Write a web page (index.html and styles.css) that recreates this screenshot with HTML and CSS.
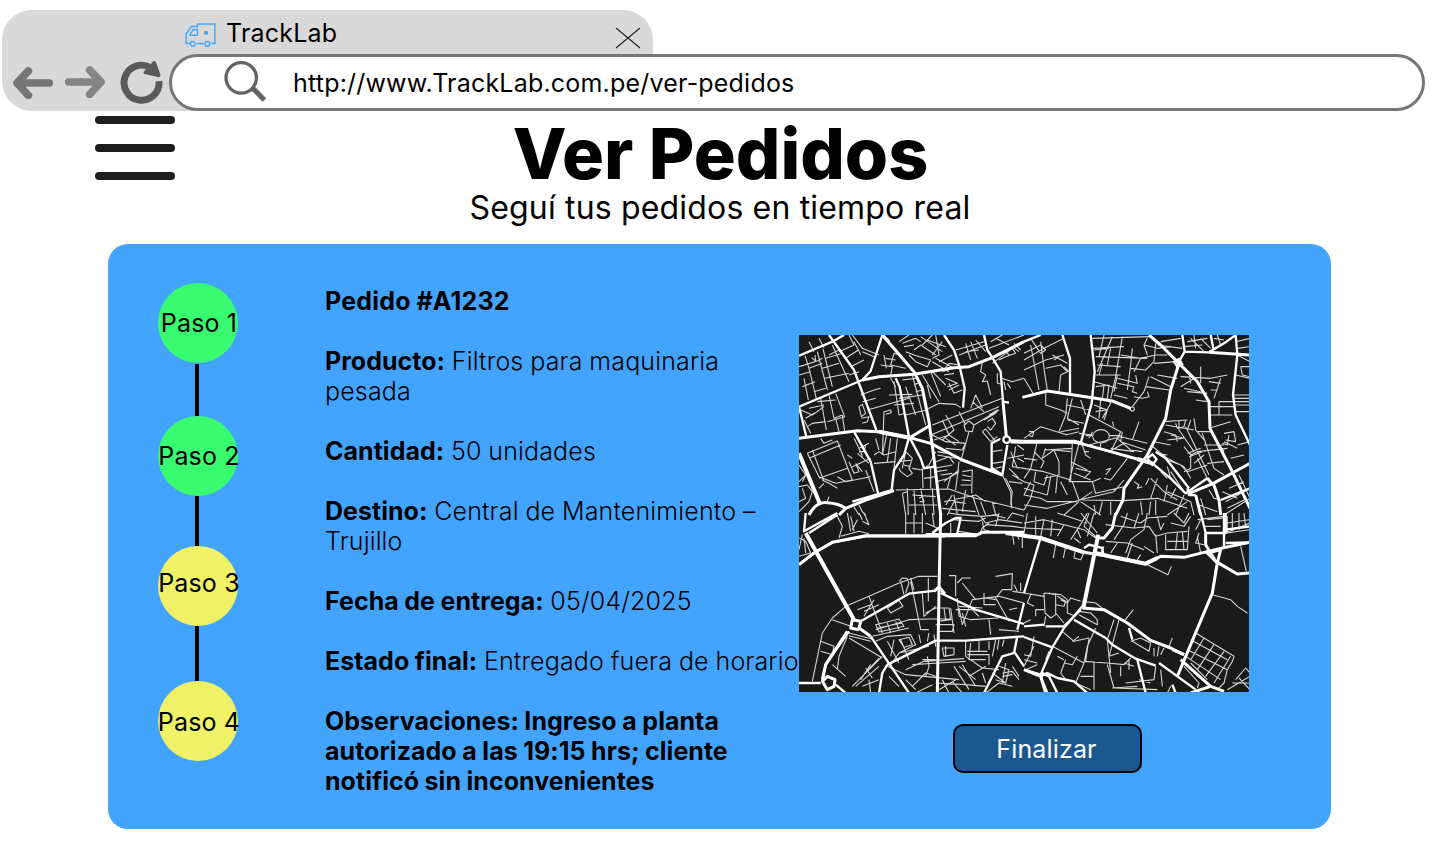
FILE: index.html
```html
<!DOCTYPE html>
<html lang="es">
<head>
<meta charset="utf-8">
<title>TrackLab</title>
<link rel="stylesheet" href="styles.css">
</head>
<body>
<header class="browser">
  <div class="tab">
    <svg class="van" viewBox="0 0 90 70" fill="none" stroke="#45a9fb" stroke-width="4.2">
      <path d="M13 60H3V32L18 10H36V3H87V60H75M31 60H34M37 60H54"/>
      <path d="M15 36V32L24 19H36V36Z"/>
      <circle cx="22" cy="61" r="7"/><circle cx="65" cy="61" r="7"/>
      <circle cx="61" cy="29" r="4" fill="#45a9fb"/>
    </svg>
    <span class="tab-title">TrackLab</span>
    <svg class="close" viewBox="0 0 26 22" stroke="#222" stroke-width="1.1"><path d="M1 1L25 21M25 1L1 21"/></svg>
  </div>
  <div class="toolbar">
    <svg class="arrow" viewBox="0 0 120 96" fill="none" stroke="#767676" stroke-width="23" stroke-linecap="round" stroke-linejoin="round"><path d="M109 48H16M46 12L12 48L46 85"/></svg>
    <svg class="arrow forward" viewBox="0 0 120 96" fill="none" stroke="#858585" stroke-width="23" stroke-linecap="round" stroke-linejoin="round"><path d="M11 48H104M74 12L108 48L74 85"/></svg>
    <svg class="reload" viewBox="0 0 130 130">
      <path d="M118 61A53 53 0 1 1 92 20" fill="none" stroke="#5a5a58" stroke-width="21"/>
      <path d="M107 1Q98 -2 94 9L71 33Q71 40 79 40L117 49Q124 49 122 41L109 4Z" fill="#5a5a58"/>
    </svg>
    <div class="address">
      <svg class="search" viewBox="0 0 128 130" fill="none" stroke="#636363"><circle cx="51" cy="51" r="46" stroke-width="10"/><path d="M82 85L90 86L121 118" stroke-width="15"/></svg>
      <span>http://www.TrackLab.com.pe/ver-pedidos</span>
    </div>
  </div>
</header>

<main>
  <div class="heading">
    <div class="menu"><i></i><i></i><i></i></div>
    <div class="titles">
      <h1>Ver Pedidos</h1>
      <p>Seguí tus pedidos en tiempo real</p>
    </div>
  </div>

  <section class="card">
    <ol class="steps">
      <li class="step done"><span>Paso 1</span></li>
      <li class="line first"></li>
      <li class="step done"><span>Paso 2</span></li>
      <li class="line second"></li>
      <li class="step pending third"><span>Paso 3</span></li>
      <li class="line last"></li>
      <li class="step pending fourth"><span>Paso 4</span></li>
    </ol>
    <div class="details">
      <p><b class="order">Pedido #A1232</b></p>
      <p><b>Producto:</b> Filtros para maquinaria<br>pesada</p>
      <p><b>Cantidad:</b> 50 unidades</p>
      <p><b>Destino:</b> Central de Mantenimiento –<br>Trujillo</p>
      <p><b>Fecha de entrega:</b> 05/04/2025</p>
      <p><b>Estado final:</b> Entregado fuera de horario</p>
      <p><b>Observaciones: Ingreso a planta<br>autorizado a las 19:15 hrs; cliente<br>notificó sin inconvenientes</b></p>
    </div>
    <div class="tracking">
      <svg class="map" viewBox="0 0 1350 1071">
        <!-- north-west -->
        <g>
          <path class="minor" d="M30 20L45 50M60 10L75 38M0 95L55 78L70 70M18 62L30 100L52 190M38 68L50 78L48 60M55 50L85 165M72 42L100 155M100 30L150 140M0 120L35 110M15 130L28 195M30 100L70 85M10 155L48 140M45 170L80 160M78 130L150 115M70 100L120 85M80 70L130 55M90 60L120 45M120 50L165 30L150 0M140 70L178 45L165 20M155 95L195 75M150 120L180 110M160 0L190 40L240 60M190 50L225 65M178 45L185 60M65 190L82 285M90 180L105 250L130 240M110 175L137 245L85 260M30 220L75 210M5 225L40 240L75 215M20 250L45 235M25 275L40 265L80 260M110 250L120 290M130 240L137 290M15 255L35 295M55 200L110 195M185 180L225 165L245 160M190 200L230 190M205 225L330 190M180 215L190 208L200 235L187 245L180 215M187 250L210 245L205 260L190 265M250 360L255 230L275 225L277 233L260 238M285 140L300 240L318 235M270 180L340 178M275 130L290 155M285 210L345 205M310 135L350 130M320 155L350 240M340 120L380 270M300 190L370 180M320 240L382 225M345 150L365 140M350 170L370 165M245 90L280 95L275 120M255 60L262 100M260 70L290 75M285 55L275 90L320 100M285 55L300 60M300 20L330 0M310 25L350 10L365 20M315 35L345 30M320 50L345 60L395 75L385 95L350 80L330 60M345 45L365 30L410 60M365 5L430 50M370 30L400 0M385 15L440 35M410 0L420 60L400 70M430 20L400 60M410 70L465 100M400 80L450 110M420 80L460 60M450 85L435 105M450 85L480 90M430 110L460 100M435 120L465 115M440 130L475 145L445 155M400 110L440 150M450 145L465 175L490 165M450 165L480 150M370 120L420 200M385 150L395 190M380 225L420 205L470 208L485 218M395 110L425 185"/>
          <path class="minor" d="M470 45L555 20M480 60L560 30M500 25L515 75M515 20L535 70M530 15L560 50M500 50L540 45M575 20L610 0M570 40L675 0M590 10L630 30M580 85L640 40L650 55L620 65L600 75M620 50L630 60M640 35L660 50M645 25L665 45M550 80L545 110L560 120L550 140L565 138L575 180M608 130L640 140L675 130M595 115L595 145L610 148M615 140L620 165M625 145L635 160M400 270L610 190M395 300L600 215M430 255L450 300L480 320M480 230L500 270M520 200L555 230M515 220L530 180L550 220M440 240L465 285L430 315M400 300L440 320L500 325L490 345L440 340M405 315L450 300M440 310L470 330M495 270L510 258L525 270L520 290L500 288L495 270M525 270L600 225M510 290L485 380M570 240L595 225L590 235L555 255M565 260L580 250L590 265L575 285L565 275M550 290L560 282L590 320L605 310M550 290L575 320L595 305M580 350L610 345M580 385L615 380M590 400L610 395M415 350L445 355M410 380L450 365L465 385M405 400L460 390M415 360L470 370M410 410L445 405M425 420L460 415M410 440L450 430M435 440L480 405M445 460L455 425L480 410M470 465L480 380M490 410L520 405L518 475M490 420L515 425M488 435L515 437M485 450L518 450M625 370L675 360M635 350L655 400M650 335L640 395L675 400M630 400L660 430M640 420L675 440M655 370L675 380M655 330L675 345"/>
          <path class="minor" d="M25 355L115 318L160 435L110 445L60 425L25 355M40 345L75 440M30 370L125 330M65 310L75 325L100 315M60 430L145 400M70 435L90 445L115 460M60 460L75 445M165 310L185 350L190 365M180 340L210 325M180 350L195 350L200 330M175 355L210 385M160 395L215 370M150 380L165 415L180 410L170 385M170 385L190 410M145 360L160 370M115 425L140 440L215 425M200 405L225 470M240 350L255 360L290 350M225 360L240 350M225 385L290 380M265 290L250 360M295 310L285 400M275 310L265 380M320 350L340 370L330 400L340 415L325 425L305 410L300 400M300 380L340 375M340 400L370 405M315 390L335 395M230 310L240 345M320 350L310 400M370 400L372 460M395 395L395 460M375 430L410 425M410 350L390 390L375 400M0 390L20 420L0 440M0 455L25 450L40 470L30 500L0 530M10 460L20 490L0 500M25 410L10 440M85 500L90 485M180 510L190 530L200 540M165 515L180 540M310 475L320 540M325 460L328 540M345 465L350 540M310 475L325 470M290 465L450 462L530 490L675 525M360 490L370 485L375 500L362 500M365 460L380 540M400 460L405 540M330 510L415 510M340 480L410 485M435 500L530 480L560 500M430 520L530 530M465 480L475 540M500 465L490 530M520 480L540 540M545 500L560 540M580 500L590 540M460 480L440 510M445 540L465 500L500 505M630 440L670 445M620 430L640 470L635 510"/>
          <path class="medium" d="M0 62L100 20L135 0M90 0L165 105L232 285M250 0L215 108L190 135L0 215L22 305M290 130L302 155L330 305M555 0L565 45L580 68L605 110L612 200L630 203M435 0L465 45L482 95L497 160L492 218M165 290L215 380L237 475M330 308L315 360L285 405L278 465L160 500M332 308L365 370L375 400L405 395M578 405L578 325L603 312M580 400L610 420L625 330"/>
          <path class="minor" d="M610 420L635 470L638 520"/>
          <path class="main" d="M190 135L240 125L345 118L465 98L510 95L580 68L675 20M250 0L345 110L370 160L390 260L405 370L425 540M0 310L175 287L240 290L332 308L395 325L490 375L610 420M332 308L395 270M635 320H675M612 200L622 305M250 0L270 20"/>
          <circle class="medium" cx="623" cy="314" r="10"/>
          <path class="wide" d="M0 355L62 505M240 290L332 308"/>
          <path class="main" d="M30 540Q50 500 85 503Q120 505 140 520L120 540M140 520L200 495L285 467"/>
        </g>
        <!-- north-east -->
        <g transform="translate(675 0)">
          <path class="minor" d="M0 75L60 40L120 10M20 10L50 55M0 105L65 75L120 60M50 20L62 115L70 165M20 30L45 165M0 55L50 30L65 45L50 55M0 130L30 180M85 60L130 85M90 75L105 65M65 100L110 90L130 110L110 120L105 170M120 95L135 110M205 10L380 5M210 45L255 40M215 65L370 70M220 90L290 95M215 120L290 120M205 40L300 35M240 0L225 65M265 5L220 110M295 5L275 125L260 190M325 40L320 90L310 165M290 60L350 70M235 85L225 120M260 40L250 90M210 140L280 160M215 155L255 150L250 190M240 150L235 190M280 130L340 145L335 120M280 145L330 155L325 170L340 175M270 180L310 190M280 120L270 170M330 110L350 70L395 60M320 100L365 105L390 80L395 25M370 10L360 30L370 60M360 30L400 40L440 35M395 60L430 60M390 85L455 80M380 125L440 155M375 125L360 170L325 215M365 155L435 165M330 185L355 190L375 185L370 170M400 120L460 130M410 20L470 10M400 30L475 40M65 165L65 210L110 225L130 235M130 190L125 240L105 290M145 190L130 250L165 270M170 195L185 240M130 210L200 225M130 255L180 265M110 290L165 280M125 300L165 290M195 240L290 290L260 350M230 195L225 250M210 210L250 225L240 255M250 190L260 205L235 250M215 230L245 225M265 260L270 275M345 260L325 315M195 330L290 305L370 325M280 310L320 345L355 350M295 290L290 320L365 345M255 350L300 325M260 340L330 350M205 290L195 310M165 295L205 300M0 310L50 275L130 300M15 290L30 290L25 305L12 300M40 320L20 400L0 430M30 350L60 380L50 400M65 340L55 370L90 345L105 380V420M60 345L145 340M145 325L140 440M165 325L135 440M90 345L140 350M105 420L60 430M40 375L0 370"/>
          <path class="minor" d="M175 330L185 360L200 370M180 350L195 350M140 380L190 405M155 400L200 410L180 430M150 415L200 435M135 440L205 440L230 430M245 420L260 400L245 405M240 430L260 435L310 370M205 440L215 475L300 455M145 440L165 495L270 470L300 435M0 400L60 410L140 435M35 410L30 440L60 450L70 420M80 425L70 480M100 425L95 475M110 440L130 480M20 440L0 480L50 490L70 500L160 500M0 510L70 520L170 495M20 490L0 525M165 497L205 470M170 500L230 540M165 500L120 540M175 495L300 497L400 490L490 520M210 510L215 540M235 500L225 540M260 500L260 540M350 500L355 540M380 500L375 540M395 495V540M330 440L345 450L340 460L355 455M365 450L375 430M400 430L380 490M380 430L420 470L460 495M430 450L420 500M455 460L440 490M480 480L455 540M490 500L430 540M410 410L430 430M430 395L440 430M440 410L480 470M380 330L430 370L480 395M390 320L440 330M400 355L430 360M420 360L430 375L470 390L490 410M420 260L490 255M455 265L460 280L480 275L485 255M425 270L510 285M465 255V285L510 350M485 275L555 420M420 290L455 300L460 320M440 300L480 310M430 315L475 310M510 250L515 285L545 320M500 255L490 285M520 290L560 290L600 350M535 295L570 400L600 420M480 335L500 360L520 350M490 355L530 340M495 365L535 350M500 355L500 400L480 410M480 395L500 430M490 410L550 390M520 370L550 430M510 385L540 360M480 160L530 170M470 125L560 130L610 120M495 110L500 145M530 95V145M470 155L510 130M490 170L550 175M555 140L590 145M590 130L570 190M560 165L580 165M515 195L550 200M585 200H630M560 215H630M585 200V240M560 240H625M635 120L678 130M630 180H678M630 190H678M630 200H678M630 210H678M630 230H678M650 95H678M650 95L655 120L678 125M555 280L620 260M600 295L630 290L635 320L605 315M615 300L610 330L595 325M600 320L640 340M640 330L678 320M620 370L660 360M540 330L600 330M520 350L610 340M600 380L550 385M500 10L540 50M510 0L515 40M490 20L550 10M530 10L560 40M480 35L535 30M570 10L600 15M580 0L590 30M635 20L678 10M640 40L678 35M640 60L678 80"/>
          <path class="minor" d="M555 465L570 490L590 495M595 470L640 490M605 500L678 460M610 520L660 495M600 540L678 490M615 460L660 440M645 420L678 490M530 490L545 540M525 510L580 530M500 500L510 540M0 440L30 450L20 490M0 460L70 480M430 470L500 500"/>
          <path class="medium" d="M115 0L138 70V180M0 20L50 0M200 0L212 110L203 205L170 325M475 0L482 50L465 80M560 0L568 40M482 50L555 52L600 25L635 0M635 0L640 60L627 180L635 240L678 330M265 198L320 220M395 350L425 370L495 460M385 385L440 430L485 475L550 430M590 495L678 460"/>
          <circle class="minor" cx="325" cy="222" r="6"/>
          <ellipse class="minor" cx="231" cy="304" rx="25" ry="20"/>
          <path class="minor" d="M185 302H205M257 302H290M230 325L228 345"/>
          <path class="main" d="M-5 187L70 168L205 188L265 198L320 220M375 0L410 30L465 85L520 140L555 200L558 280L625 410L678 520M465 85L440 165L425 250L370 360L300 460L297 495L275 540M150 320L260 350L360 378L385 385M555 52L678 60M495 475L568 445L678 385M568 445L585 495L590 540M515 480L530 540M550 430L568 450"/>
          <path class="wide" d="M-40 319L0 320H150L175 326M340 372L385 385"/>
          <path class="medium" d="M370 370L385 358L398 373L385 390L370 370M450 80L465 72L475 88L460 95ZM490 460L495 480L515 480"/>
        </g>
        <!-- south-west -->
        <g transform="translate(0 534)">
          <path class="minor" d="M110 0L130 40L120 75M125 70L180 55L210 62M155 10L165 55M145 0L155 55M175 20L160 50M180 0L190 20M195 0L210 35L190 25M0 75L20 85L35 120L0 130M10 65L0 110M15 75L20 120M320 0V62M345 0V60M370 0V60M320 30H370M400 0L405 40M380 30L415 45L400 60M450 0L480 5L550 10L600 5M460 20L540 25L560 15M455 30L455 60M480 55L540 65L550 45L570 30M550 25L555 50L590 60M545 10L560 30L600 20L670 30M560 35L640 40L675 45M600 0L590 40M625 20L640 0L675 10M640 60L645 95M655 65L660 80M670 60L670 105M580 5L620 15"/>
          <path class="minor" d="M40 505L70 360L100 315L140 280L210 250L300 210L360 190L415 190M300 205L310 195L325 197L330 210L320 240M305 205L315 245M335 205L365 350M388 195V265M335 195L345 230M100 320L155 340M210 250L250 360M225 260L195 310M175 290L215 275M195 295L240 275M265 285L300 262L312 280L275 300ZM230 335L300 318L315 340L240 357ZM235 345L310 330M265 330L275 360M290 325L300 350M230 350L330 320L390 318H460M370 240L375 310L410 280M380 300L410 285H450L455 320L415 325M365 350H390M415 355H460L465 335L410 335M435 285L440 320M455 285L465 360M480 285L490 335L500 310L520 260L600 250L675 270M475 255L480 310L515 320L600 315M450 188H470V250M475 210L490 195L515 195M490 210L530 260M590 190L640 182L638 230L610 230L590 255L630 325M555 240V275H590M560 255L590 260M640 235L675 240M645 215L655 235M665 210V235M480 280L550 285M470 290L520 290L540 310M570 320L575 365M490 300L500 340M600 350L660 355M630 290L655 285"/>
          <path class="minor" d="M65 385L105 400L100 425L65 415M150 360L220 378M150 368L215 385M145 370L120 430L115 470M150 375L250 435M230 385L265 370L335 365L350 395L300 420M220 370L330 345M300 380L330 373L340 395L315 403ZM265 385L300 450M305 380L330 440M285 380L275 430M250 430L160 520M240 435L190 490M215 455L185 500M200 465L220 495M100 455L140 490M265 460L320 485L480 500M360 365L365 390M390 360L385 385M405 365L410 400M275 455L300 420L390 400M320 470L375 445L495 437M340 455L420 450L500 445M370 440H410M385 430L390 460L380 490M430 405H465V425L435 430ZM440 400V430M500 385V430L550 465L600 470M515 390L510 440L560 440M540 385V415M505 415H565M505 425H570V455M570 385V410M590 380L580 430M600 380L595 410M615 380L610 400M465 460L510 530M490 455L530 520M480 460L530 500M510 490L560 460M270 490L300 520M320 500L350 530M340 520L380 480L410 490M410 510L500 515L560 520M420 530L470 500M430 500L450 540M460 505L490 540M350 540L400 515M550 480L560 510M240 500L190 520M170 520L240 460M210 500L215 540M600 460L630 470L620 510L590 500M610 480L640 475L660 500M610 490L640 485M600 510L640 520M620 450L610 510M640 460L660 490M580 480L620 510M560 540L600 510"/>
          <path class="medium" d="M20 0L15 55L60 30L115 0M0 155L45 120L100 88L200 70H440M30 60L115 5M185 325L330 242L410 233M425 240L530 290L675 333M215 370L330 540M70 505L80 455L150 355M265 455L410 383H500L675 370M655 350L675 270M265 455L250 480L240 540M555 540L610 430L645 420L655 370M645 415L675 460M440 30L470 15H485L475 60M0 510H65M110 515L140 540M400 60L440 30"/>
          <path class="main" d="M45 120L100 88L200 68H530L550 58H675M425 0L420 235L415 540M0 155L45 120M70 500L80 455L145 355"/>
          <path class="wide" d="M20 60L165 320M380 66H530M620 60L680 68"/>
          <path class="main" d="M160 320L185 325L180 345L215 370M160 320L155 345L180 350M70 505L85 490L108 500L105 520L85 530ZM405 235L420 222L438 243"/>
        </g>
        <!-- south-east -->
        <g transform="translate(675 534)">
          <path class="minor" d="M0 30L60 20L120 35L100 70M10 0L0 60M35 10V65M60 20L50 70M85 20L80 70M0 45L110 50M120 35L180 50L215 75M140 80L160 50L170 75M150 75L165 85M155 80L170 90M190 0L160 50M170 0L220 60M195 0L180 40L220 75M210 0L190 70M100 0L190 30M95 95L88 135M125 100L118 135M155 105L150 135L170 140L180 120M245 85L310 90L360 110M245 35L330 45L375 40L395 70M270 80L300 35L310 0M305 120L320 80L360 50L370 0M240 100L230 120M280 90L260 120M325 90L310 135M350 125L340 140M360 100L390 120M345 0L330 45M290 10L350 30L370 15L430 10M400 10L410 50L420 30M395 65L400 120M395 70L430 60L490 55M425 65V110H490L495 40M430 85H490M460 60L455 110M475 55L480 110M440 30L480 40L500 10M450 0L480 30L495 0M520 20L600 10M540 40L590 40M525 60L515 90L540 95M520 70L530 120M530 20L515 50M550 20L600 15M610 10V60L678 50M610 30L678 20M625 0V55M645 0V50M660 0L665 45M605 60L678 30M650 100L667 175M370 155L432 185L442 160M575 160L565 245L620 260L640 280L670 300"/>
          <path class="minor" d="M60 240L110 245L130 260M60 240L63 300L80 315L95 305V240M75 240L90 245M100 250L125 265L120 280L95 275M110 260L130 270L140 255L170 265M0 240L60 250M20 245L10 270L30 280M60 290L35 290V310M130 260L130 300L155 310M65 310L60 340M95 300L120 330M175 265L215 270L240 290M165 295L200 300L220 320V335L165 305M20 320L0 330M115 355L150 385L195 375L185 445M215 345L190 400L180 450M145 385L165 370M270 320L250 380L260 480M285 320L265 395L255 430L285 420M180 445L250 450L300 455L320 435M210 445V530M85 400L180 450M125 440L110 480L125 500M160 430L145 455L120 450M100 430L120 440M75 415L65 440M30 370L20 430L0 425M30 400L0 460M0 440L40 450M5 470L40 455M170 490H210M180 450L155 510L200 530M250 455L270 525L400 530M265 525L340 520M290 460V490M315 440V470M300 450L330 460M305 510L390 500L395 460M345 500L380 510M390 405V430M405 400L400 430M420 405L410 425M320 385L350 375L380 390L375 415L325 385M328 290L300 325M445 375L435 400M410 470L415 520M440 520L430 540M515 360L630 430L625 445L610 470L600 510L580 530M500 380L610 440M490 410L610 470M485 430L590 500M540 375L500 440M570 395L520 470M600 415L545 490M620 430L570 510M480 460L525 510L520 525M500 450L550 500M610 530L678 490M625 510L678 510M635 500L665 465L678 480M645 495L678 530"/>
          <path class="medium" d="M48 80L0 240M0 340L60 335M65 340H120L170 290M0 372L85 403M85 403L50 485M85 403L120 345L175 280M150 320L245 375L265 395L335 437L395 458M315 345L325 380M340 440L365 540M405 450L515 530M530 0L545 60H605V0M600 0V105M605 90L678 88M180 105L195 95L235 105L238 125M605 50L678 40M0 470L50 485M50 490L70 480L100 495L150 505L190 540M50 490L70 540M70 480L100 540M445 515L455 540"/>
          <path class="main" d="M50 75L180 118L270 133L365 152L410 130L480 133L540 118L605 103L678 88M275 0L265 45L240 75L220 75M175 285L240 290L310 330L380 382L440 405L480 425M580 150L565 240L460 490M580 148L640 183L678 180M470 440L560 520L600 535M545 60L545 95L575 145M0 470L50 490L65 540M500 540L560 520"/>
          <path class="wide" d="M0 68L50 75L180 118M223 65L178 285M215 120L270 133L365 152L400 135"/>
          <path class="main" d="M545 115L580 150L590 110L560 118M445 410L480 425M50 480L80 490"/>
        </g>
      </svg>
      <button class="finish" type="button">Finalizar</button>
    </div>
  </section>
</main>
</body>
</html>
```
FILE: styles.css
```css
* { box-sizing: border-box; }
body {
  margin: 0;
  background: #fff;
  color: #000;
  font-family: Inter, "Liberation Sans", sans-serif;
  font-size: 25px;
  line-height: 30px;
}
svg { display: block; flex: none; }
h1, p, ol { margin: 0; padding: 0; }
.browser {
  width: 651px;
  height: 101px;
  margin: 10px 0 0 2px;
  background: #d9d9d9;
  border-radius: 30px 30px 0 30px;
  letter-spacing: 0.2px;
}
.tab {
  display: flex;
  height: 44px;
  padding: 0 12px 0 183px;
}
.van { width: 31px; height: 24px; margin-top: 13px; }
.tab-title { margin: 8px auto 0 10px; }
.close { width: 26px; height: 22px; margin-top: 17px; }
.toolbar { display: flex; height: 57px; }
.arrow { width: 40px; height: 32px; margin: 13px 0 0 11px; }
.forward { margin: 12px 0 0 12px; }
.reload { width: 43px; height: 43px; margin: 7px 0 0 15px; }
.address {
  flex: none;
  display: flex;
  width: 1256px;
  height: 57px;
  margin-left: 6px;
  padding-left: 52px;
  background: #fff;
  border: 3px solid #777;
  border-radius: 29px;
}
.search { width: 43px; height: 43px; margin: 4px 0 0; }
.address span { margin: 11px 0 0 26px; }
.heading { display: flex; height: 133px; padding-left: 95px; }
.menu {
  display: flex;
  flex-direction: column;
  gap: 20px;
  width: 80px;
  padding-top: 5px;
}
.menu i { height: 8px; border-radius: 4px; background: #1e1e1e; }
.titles { width: 1090px; padding-top: 8px; text-align: center; }
h1 { padding-left: 1px; font-size: 70px; line-height: 69px; font-weight: 800; }
.titles p { font-size: 32px; line-height: 39px; letter-spacing: 0.17px; }
.card {
  display: flex;
  width: 1223px;
  height: 585px;
  margin-left: 108px;
  padding: 39px 0 0 50px;
  background: #43a4ff;
  border-radius: 20px;
}
.steps {
  display: flex;
  flex-direction: column;
  align-items: center;
  width: 80px;
  list-style: none;
  letter-spacing: 0.15px;
}
.step {
  display: flex;
  align-items: center;
  justify-content: center;
  width: 80px;
  height: 80px;
  border-radius: 50%;
  white-space: nowrap;
}
.step span { padding-left: 2px; }
.done { background: #38fb70; }
.pending { background: #eff267; }
.third { padding-bottom: 6px; }
.fourth { padding-top: 2px; }
.line { width: 4px; margin-right: 2px; background: #000; }
.first { height: 52px; margin-top: 1px; }
.second { height: 50px; }
.last { height: 55px; }
.details {
  display: flex;
  flex-direction: column;
  gap: 30px;
  width: 474px;
  margin: 3px 0 0 87px;
  font-weight: 300;
  letter-spacing: 0.15px;
  word-spacing: -0.4px;
  white-space: nowrap;
}
.details b { font-weight: 700; letter-spacing: 0.03px; }
.details .order { letter-spacing: 0.2px; }
.tracking {
  display: flex;
  flex-direction: column;
  align-items: center;
  width: 450px;
  padding-top: 52px;
}
.map { width: 450px; height: 357px; background: #1a1a1a; overflow: hidden; }
.map path, .map circle, .map ellipse { fill: none; stroke: #fff; stroke-linejoin: round; }
.map .minor { stroke: #d6d6d6; stroke-width: 3.3; }
.map .medium { stroke-width: 7; }
.map .main { stroke-width: 9; }
.map .wide { stroke-width: 12; }
.finish {
  width: 189px;
  height: 49px;
  margin: 32px 0 0 47px;
  padding: 0 2px 0 0;
  border: 2px solid #000;
  border-radius: 10px;
  background: #1b588f;
  color: #fff;
  font: 25px/30px Inter, "Liberation Sans", sans-serif;
  letter-spacing: 0.15px;
}
```
